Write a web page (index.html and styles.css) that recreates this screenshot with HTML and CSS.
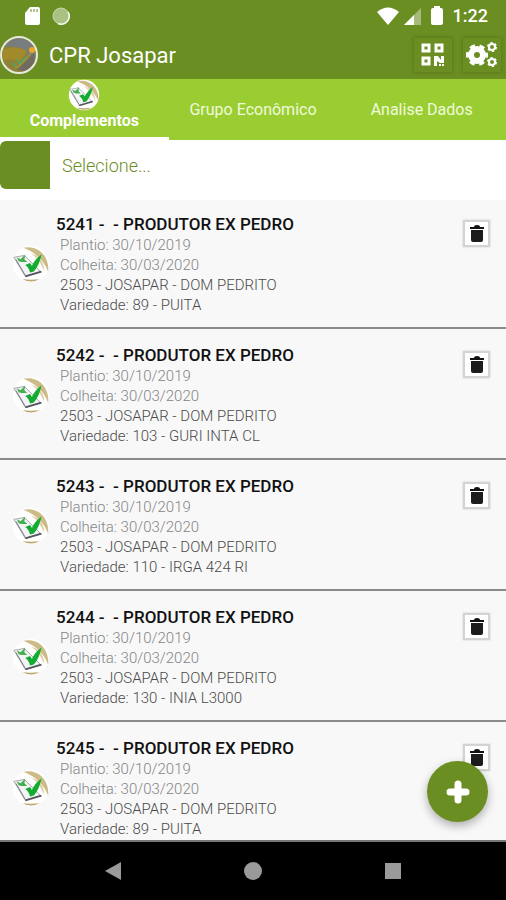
FILE: index.html
```html
<!DOCTYPE html>
<html lang="pt-BR">

<head>
    <meta charset="UTF-8">
    <meta name="viewport" content="width=device-width, initial-scale=1.0">
    <link rel="stylesheet" href="styles.css">
    <title>CPR Josapar</title>
</head>

<body>
    <!-- shared icons -->
    <svg class="sprite" aria-hidden="true">
        <symbol id="check" viewBox="0 0 40 40">
            <circle cx="20" cy="20" r="19" fill="#fff" />
            <path d="M12 3C27-1 40 12 38 28C34 17 25 8 12 3Z" fill="#cdbb87" />
            <path d="M20 9C28 11 34 18 34 27C30 19 27 14 20 9Z" fill="#ddcfa4" />
            <path d="M11 36Q20 41 29 36Q20 37 11 36Z" fill="#b9a970" />
            <path d="M2 13L13 11L30 28L14 33Z" fill="#f4f4f6" stroke="#a4a4ac" />
            <path d="M14 33L31 28" stroke="#55555d" stroke-width="2" fill="none" />
            <path d="M4 15L14 32" stroke="#77777f" stroke-width="1" fill="none" />
            <path d="M5 13L9 15L14 10L13 15L16 18L10 18L7 17Z" fill="#42b04c" />
            <path d="M14 21L19 19L21 22Q24 15 31 10Q29 21 23 28L19 29Q18 24 14 21Z" fill="#12ac30" />
        </symbol>
        <symbol id="trash" viewBox="0 0 16 18">
            <path d="M1 2H5Q5 0 8 0T11 2H15V4H1Z" fill="#111" />
            <path d="M2 5H14V15Q14 17 12 17H4Q2 17 2 15Z" fill="#1c1c1c" />
        </symbol>
    </svg>

    <div class="status">
        <svg class="status-icon" width="16" height="20" viewBox="0 0 16 20">
            <path d="M6 1H14Q16 1 16 3V17Q16 19 14 19H3Q1 19 1 17V7Z" fill="#fff" />
            <path d="M7 3V6M10 3V6M13 3V6" stroke="#6b8e23" stroke-width="1" />
        </svg>
        <svg class="status-icon" width="18" height="18" viewBox="0 0 18 18">
            <circle cx="9" cy="9" r="8" fill="#a9c283" stroke="#c6d7ab" />
            <path d="M16 5A8 8 0 0 1 6 16.500" fill="none" stroke="#f4f8ee" stroke-width="1.5" />
        </svg>
        <div class="status-right">
            <svg width="22" height="18" viewBox="0 0 22 18">
                <path d="M0 5Q11-4 22 5L11 18Z" fill="#fff" />
            </svg>
            <svg width="18" height="18" viewBox="0 0 18 18">
                <path d="M18 1V18H1Z" fill="#a6bb7b" />
                <path d="M11 8V18H1Z" fill="#fff" />
            </svg>
            <svg class="battery" width="12" height="20" viewBox="0 0 12 20">
                <path d="M3 2V0H9V2H10Q12 2 12 4V17Q12 19 10 19H2Q0 19 0 17V4Q0 2 2 2Z" fill="#fff" />
            </svg>
            <span class="clock">1:22</span>
        </div>
    </div>

    <header class="appbar">
        <svg class="avatar" width="38" height="38" viewBox="0 0 38 38">
            <circle cx="19" cy="19" r="18" fill="#8d8238" />
            <path d="M4 10Q16-3 30 6Q37 13 35 24L20 12Z" fill="#777d7c" />
            <path d="M3 14Q14 8 27 15L20 25Q10 22 3 24Z" fill="#a28a2b" />
            <path d="M17 34L34 17Q37 29 25 35Z" fill="#706b62" />
            <path d="M12 27L16 30M17 23L20 28M20 27L27 21" stroke="#55a35a" stroke-width="2" />
            <path d="M15 32Q25 27 32 15" fill="none" stroke="#b8983a" stroke-width="1" />
            <circle cx="32" cy="14" r="3" fill="#eda51e" />
            <circle cx="19" cy="19" r="18" fill="none" stroke="#e6e9de" stroke-width="2" />
        </svg>
        <h1 class="title">CPR Josapar</h1>
        <button class="tool" type="button" aria-label="QR Code">
            <svg width="24" height="24" viewBox="0 0 24 24" fill="none" stroke="#fff" stroke-width="3">
                <path d="M2 2H8V8H2ZM15 2H21V8H15ZM2 15H8V21H2Z" />
                <path d="M13 13H17L20 17V13H23V20H19L16 18V23H13Z" fill="#fff" stroke="none" />
                <path d="M18 21H20V23H18ZM21 21H23V23H21Z" fill="#fff" stroke="none" />
            </svg>
        </button>
        <button class="tool" type="button" aria-label="Configurações">
            <svg width="32" height="26" viewBox="0 0 32 26" fill="none" stroke="#fff">
                <circle cx="11" cy="13" r="6" stroke-width="6" />
                <circle cx="11" cy="13" r="9" stroke-width="4" stroke-dasharray="5 4.420" stroke-dashoffset="2.500" />
                <circle cx="26" cy="5" r="3" stroke-width="2" />
                <circle cx="26" cy="5" r="4" stroke-width="2" stroke-dasharray="2.200 1.990" />
                <circle cx="26" cy="20" r="3" stroke-width="2" />
                <circle cx="26" cy="20" r="4" stroke-width="2" stroke-dasharray="2.200 1.990" />
            </svg>
        </button>
    </header>

    <nav class="tabs">
        <a class="tab active" href="#complementos">
            <svg width="32" height="32"><use href="#check" /></svg>
            Complementos
        </a>
        <a class="tab" href="#grupo">Grupo Econômico</a>
        <a class="tab" href="#analise">Analise Dados</a>
    </nav>

    <div class="filter">
        <label class="filter-mark" for="filtro" aria-label="Filtro"></label>
        <select class="filter-select" id="filtro">
            <option>Selecione...</option>
        </select>
    </div>

    <main class="content">
        <ul class="list">
            <li class="row">
                <svg class="row-icon" width="38" height="38"><use href="#check" /></svg>
                <div class="info">
                    <h2 class="name">5241 -  - PRODUTOR EX PEDRO</h2>
                    <p class="date">Plantio: 30/10/2019</p>
                    <p class="date">Colheita: 30/03/2020</p>
                    <p>2503 - JOSAPAR - DOM PEDRITO</p>
                    <p>Variedade: 89 - PUITA</p>
                </div>
                <button class="delete" type="button" aria-label="Excluir 5241">
                    <svg width="16" height="18"><use href="#trash" /></svg>
                </button>
            </li>
            <li class="row">
                <svg class="row-icon" width="38" height="38"><use href="#check" /></svg>
                <div class="info">
                    <h2 class="name">5242 -  - PRODUTOR EX PEDRO</h2>
                    <p class="date">Plantio: 30/10/2019</p>
                    <p class="date">Colheita: 30/03/2020</p>
                    <p>2503 - JOSAPAR - DOM PEDRITO</p>
                    <p>Variedade: 103 - GURI INTA CL</p>
                </div>
                <button class="delete" type="button" aria-label="Excluir 5242">
                    <svg width="16" height="18"><use href="#trash" /></svg>
                </button>
            </li>
            <li class="row">
                <svg class="row-icon" width="38" height="38"><use href="#check" /></svg>
                <div class="info">
                    <h2 class="name">5243 -  - PRODUTOR EX PEDRO</h2>
                    <p class="date">Plantio: 30/10/2019</p>
                    <p class="date">Colheita: 30/03/2020</p>
                    <p>2503 - JOSAPAR - DOM PEDRITO</p>
                    <p>Variedade: 110 - IRGA 424 RI</p>
                </div>
                <button class="delete" type="button" aria-label="Excluir 5243">
                    <svg width="16" height="18"><use href="#trash" /></svg>
                </button>
            </li>
            <li class="row">
                <svg class="row-icon" width="38" height="38"><use href="#check" /></svg>
                <div class="info">
                    <h2 class="name">5244 -  - PRODUTOR EX PEDRO</h2>
                    <p class="date">Plantio: 30/10/2019</p>
                    <p class="date">Colheita: 30/03/2020</p>
                    <p>2503 - JOSAPAR - DOM PEDRITO</p>
                    <p>Variedade: 130 - INIA L3000</p>
                </div>
                <button class="delete" type="button" aria-label="Excluir 5244">
                    <svg width="16" height="18"><use href="#trash" /></svg>
                </button>
            </li>
            <li class="row">
                <svg class="row-icon" width="38" height="38"><use href="#check" /></svg>
                <div class="info">
                    <h2 class="name">5245 -  - PRODUTOR EX PEDRO</h2>
                    <p class="date">Plantio: 30/10/2019</p>
                    <p class="date">Colheita: 30/03/2020</p>
                    <p>2503 - JOSAPAR - DOM PEDRITO</p>
                    <p>Variedade: 89 - PUITA</p>
                </div>
                <button class="delete" type="button" aria-label="Excluir 5245">
                    <svg width="16" height="18"><use href="#trash" /></svg>
                </button>
            </li>
        </ul>
        <button class="fab" type="button" aria-label="Adicionar">
            <svg width="24" height="24" viewBox="0 0 24 24">
                <path d="M12 4V20M4 12H20" stroke="#fff" stroke-width="7" stroke-linecap="round" />
            </svg>
        </button>
    </main>

    <div class="navbar">
        <button class="nav-button" type="button" aria-label="Voltar">
            <svg width="18" height="18" viewBox="0 0 18 18"><path d="M17 0V18L1 9Z" fill="#9a9a9a" /></svg>
        </button>
        <button class="nav-button" type="button" aria-label="Início">
            <svg width="18" height="18" viewBox="0 0 18 18"><circle cx="9" cy="9" r="9" fill="#9a9a9a" /></svg>
        </button>
        <button class="nav-button" type="button" aria-label="Recentes">
            <svg width="18" height="18" viewBox="0 0 18 18"><path d="M1 1H17V17H1Z" fill="#9a9a9a" /></svg>
        </button>
    </div>
</body>

</html>
```

FILE: styles.css
```css
* {
    margin: 0;
    padding: 0;
    box-sizing: border-box;
}

body {
    height: 100vh;
    display: flex;
    flex-direction: column;
    overflow: hidden;
    background: #f8f8f8;
    font-family: Roboto, "Liberation Sans", sans-serif;
    font-size: 15px;
}

button {
    border: none;
    cursor: pointer;
}

svg {
    display: block;
    flex-shrink: 0;
}

.sprite {
    position: absolute;
    width: 0;
    height: 0;
}

/* status bar and app bar */
.status {
    height: 31px;
    display: flex;
    align-items: center;
    gap: 12px;
    padding: 0 18px 0 24px;
    background: #6b8e23;
    color: #fff;
}

.status-right {
    display: flex;
    align-items: center;
    gap: 4px;
    margin-left: auto;
}

.battery {
    margin: 0 6px;
}

.clock {
    font-size: 18px;
    font-weight: 500;
}

.appbar {
    height: 48px;
    display: flex;
    align-items: center;
    gap: 11px;
    padding-right: 5px;
    background: #6b8e23;
}

.title {
    flex: 1;
    color: #fff;
    font-size: 22px;
    font-weight: 400;
}

.tool {
    width: 38px;
    height: 34px;
    display: flex;
    align-items: center;
    justify-content: center;
    background: #6b8e23;
    box-shadow: 0 0 3px 1px #5a7a1b;
}

/* tabs */
.tabs {
    height: 61px;
    display: grid;
    grid-template-columns: repeat(3, 1fr);
    background: #9acd32;
}

.tab {
    display: flex;
    flex-direction: column;
    align-items: center;
    justify-content: center;
    color: #f0fadc;
    font-size: 16px;
    line-height: 20px;
    text-decoration: none;
}

.tab.active {
    justify-content: flex-start;
    border-bottom: 3px solid #fff;
    color: #fff;
    font-weight: 700;
}

/* filter */
.filter {
    position: relative;
    z-index: 1;
    height: 60px;
    display: flex;
    align-items: flex-start;
    gap: 12px;
    margin-bottom: -2px;
    padding-top: 1px;
    background: #fff;
}

.filter-mark {
    width: 50px;
    height: 48px;
    border-radius: 6px 0 0 6px;
    background: #6b8e23;
}

.filter-select {
    flex: 1;
    height: 48px;
    border: none;
    appearance: none;
    background: none;
    color: #6b8e23;
    font-family: inherit;
    font-size: 18px;
    font-weight: 300;
}

/* list */
.content {
    position: relative;
    flex: 1;
    min-height: 0;
    overflow: hidden;
}

.list {
    list-style: none;
}

.row {
    display: flex;
    align-items: flex-start;
    padding: 15px 16px 12px 12px;
    border-bottom: 2px solid #8a8a8a;
}

.row-icon {
    align-self: center;
}

.info {
    flex: 1;
    padding-left: 10px;
    color: #4a4a4a;
    font-weight: 300;
    line-height: 20px;
}

.name {
    margin-left: -4px;
    color: #111;
    font-size: 17px;
    font-weight: 500;
    line-height: 22px;
    white-space: pre;
}

.date {
    color: #858585;
}

.delete {
    width: 27px;
    height: 27px;
    display: flex;
    align-items: center;
    justify-content: center;
    margin-top: 7px;
    border: 2px solid #d3d3d3;
    background: #fff;
    box-shadow: 0 0 2px #ccc;
}

.fab {
    position: absolute;
    right: 18px;
    bottom: 18px;
    width: 61px;
    height: 61px;
    display: flex;
    align-items: center;
    justify-content: center;
    border-radius: 50%;
    background: #6b8e23;
    box-shadow: 0 4px 10px rgba(0, 0, 0, 0.3);
}

/* system navigation */
.navbar {
    height: 60px;
    display: flex;
    justify-content: center;
    gap: 100px;
    border-top: 2px solid #777;
    background: #000;
}

.nav-button {
    width: 40px;
    display: flex;
    align-items: center;
    justify-content: center;
    background: none;
}
```
